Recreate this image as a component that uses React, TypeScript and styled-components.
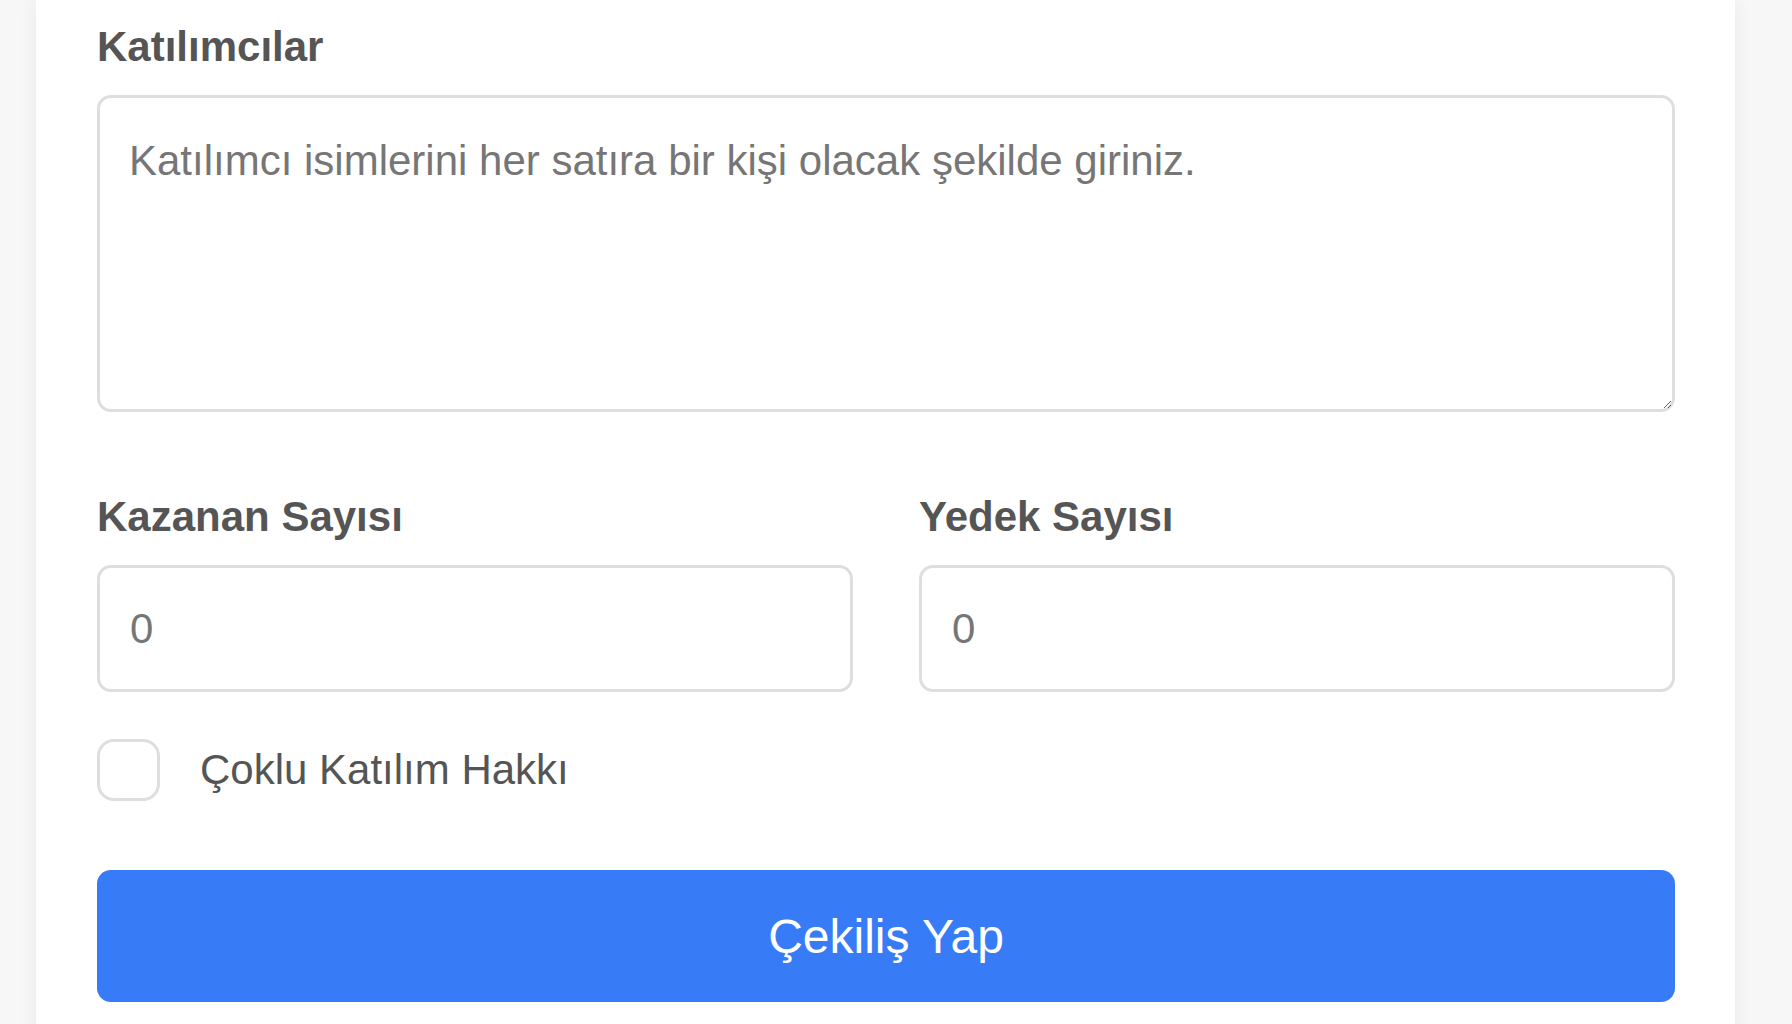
import React from "react";
import styled, { createGlobalStyle } from "styled-components";

const GlobalStyle = createGlobalStyle`
  html, body {
    margin: 0;
    padding: 0;
    background: #f7f7f7;
    font-family: "Liberation Sans", Arial, Helvetica, sans-serif;
  }
  * { box-sizing: border-box; }
`;

const Page = styled.div`
  padding: 0 57px 0 36px;
`;

const Card = styled.main`
  background: #ffffff;
  box-shadow: 0 0 18px rgba(0, 0, 0, 0.06);
  padding: 24px 60px 64px 61px;
  display: flex;
  flex-direction: column;
`;

const Field = styled.div<{ $gapAfter?: number }>`
  display: flex;
  flex-direction: column;
  gap: 25px;
  margin-bottom: ${(p) => p.$gapAfter ?? 0}px;
`;

const Label = styled.label`
  font-size: 42px;
  line-height: 46px;
  font-weight: 700;
  color: #555555;
`;

const TextArea = styled.textarea`
  width: 100%;
  height: 317px;
  border: 3px solid #dedede;
  border-radius: 14px;
  padding: 39px 29px 35px;
  font-family: inherit;
  font-size: 42px;
  line-height: normal;
  color: #555555;
  background: #ffffff;
  outline: none;
  &::placeholder {
    color: #767676;
  }
`;

const Row = styled.div`
  display: grid;
  grid-template-columns: 1fr 1fr;
  column-gap: 66px;
`;

const NumberInput = styled.input`
  width: 100%;
  height: 127px;
  border: 3px solid #dedede;
  border-radius: 14px;
  padding: 0 30px;
  font-family: inherit;
  font-size: 42px;
  color: #767676;
  background: #ffffff;
  outline: none;
  &::placeholder {
    color: #767676;
  }
`;

const CheckRow = styled.label`
  display: flex;
  align-items: center;
  gap: 40px;
  margin-top: 47px;
  cursor: pointer;
`;

const Check = styled.input`
  appearance: none;
  -webkit-appearance: none;
  margin: 0;
  width: 63px;
  height: 62px;
  border: 3px solid #dedede;
  border-radius: 17px;
  background: #ffffff;
  flex: none;
`;

const CheckText = styled.span`
  font-size: 42px;
  color: #555555;
`;

const Button = styled.button`
  margin-top: 69px;
  width: 100%;
  height: 132px;
  border: none;
  border-radius: 14px;
  background: #387bf6;
  color: #ffffff;
  font-family: inherit;
  font-size: 48px;
  cursor: pointer;
`;

export default function App() {
  return (
    <>
      <GlobalStyle />
      <Page>
        <Card>
          <Field $gapAfter={82}>
            <Label htmlFor="participants">Katılımcılar</Label>
            <TextArea
              id="participants"
              placeholder="Katılımcı isimlerini her satıra bir kişi olacak şekilde giriniz."
            />
          </Field>
          <Row>
            <Field>
              <Label htmlFor="winners">Kazanan Sayısı</Label>
              <NumberInput id="winners" type="number" placeholder="0" />
            </Field>
            <Field>
              <Label htmlFor="backups">Yedek Sayısı</Label>
              <NumberInput id="backups" type="number" placeholder="0" />
            </Field>
          </Row>
          <CheckRow>
            <Check type="checkbox" />
            <CheckText>Çoklu Katılım Hakkı</CheckText>
          </CheckRow>
          <Button type="button">Çekiliş Yap</Button>
        </Card>
      </Page>
    </>
  );
}
